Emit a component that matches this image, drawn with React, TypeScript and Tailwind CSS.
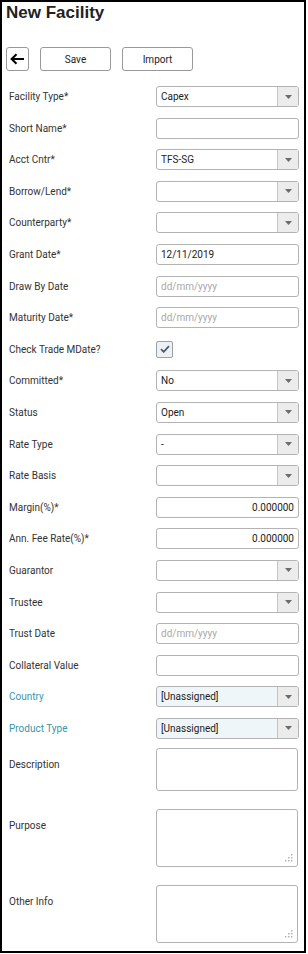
import React from 'react';

type Field =
  | { label: string; kind: 'select'; value?: string; tinted?: boolean }
  | { label: string; kind: 'text'; value?: string; placeholder?: string; right?: boolean }
  | { label: string; kind: 'check' };

const fields: Field[] = [
  { label: 'Facility Type*', kind: 'select', value: 'Capex' },
  { label: 'Short Name*', kind: 'text' },
  { label: 'Acct Cntr*', kind: 'select', value: 'TFS-SG' },
  { label: 'Borrow/Lend*', kind: 'select' },
  { label: 'Counterparty*', kind: 'select' },
  { label: 'Grant Date*', kind: 'text', value: '12/11/2019' },
  { label: 'Draw By Date', kind: 'text', placeholder: 'dd/mm/yyyy' },
  { label: 'Maturity Date*', kind: 'text', placeholder: 'dd/mm/yyyy' },
  { label: 'Check Trade MDate?', kind: 'check' },
  { label: 'Committed*', kind: 'select', value: 'No' },
  { label: 'Status', kind: 'select', value: 'Open' },
  { label: 'Rate Type', kind: 'select', value: '-' },
  { label: 'Rate Basis', kind: 'select' },
  { label: 'Margin(%)*', kind: 'text', value: '0.000000', right: true },
  { label: 'Ann. Fee Rate(%)*', kind: 'text', value: '0.000000', right: true },
  { label: 'Guarantor', kind: 'select' },
  { label: 'Trustee', kind: 'select' },
  { label: 'Trust Date', kind: 'text', placeholder: 'dd/mm/yyyy' },
  { label: 'Collateral Value', kind: 'text' },
  { label: 'Country', kind: 'select', value: '[Unassigned]', tinted: true },
  { label: 'Product Type', kind: 'select', value: '[Unassigned]', tinted: true },
];

const Caret = () => (
  <svg width="7" height="4" viewBox="0 0 7 4">
    <path d="M0 0h7L3.5 4z" fill="#6b6b6b" />
  </svg>
);

const ResizeGrip = () => (
  <svg width="8" height="8" viewBox="0 0 8 8" className="absolute bottom-[4px] right-[4px]">
    <g fill="#b5b5b5">
      <rect x="6" y="0" width="1.5" height="1.5" />
      <rect x="3" y="3" width="1.5" height="1.5" />
      <rect x="6" y="3" width="1.5" height="1.5" />
      <rect x="0" y="6" width="1.5" height="1.5" />
      <rect x="3" y="6" width="1.5" height="1.5" />
      <rect x="6" y="6" width="1.5" height="1.5" />
    </g>
  </svg>
);

const Control = ({ f }: { f: Field }) => {
  if (f.kind === 'check') {
    return (
      <div className="w-[17px] h-[17px] border border-[#9aa0a6] rounded-[2px] bg-[#eef1f4] flex items-center justify-center">
        <svg width="10" height="8" viewBox="0 0 10 8">
          <path d="M1 4.2l2.7 2.6L9 1.2" stroke="#4a5a6a" strokeWidth="1.8" fill="none" />
        </svg>
      </div>
    );
  }
  if (f.kind === 'select') {
    return (
      <div
        className={`w-[143px] h-[21px] border border-[#b3b3b3] rounded-[3px] flex overflow-hidden ${
          f.tinted ? 'bg-[#eef6f9]' : 'bg-white'
        }`}
      >
        <div className="flex-1 flex items-center pl-[4px] text-[#222]">{f.value}</div>
        <div className="w-[21px] border-l border-[#c4c4c4] bg-[#ececec] flex items-center justify-center">
          <Caret />
        </div>
      </div>
    );
  }
  return (
    <div
      className={`w-[143px] h-[21px] border border-[#b3b3b3] rounded-[3px] bg-white flex items-center px-[4px] ${
        f.right ? 'justify-end' : ''
      }`}
    >
      {f.value ? (
        <span className="text-[#222]">{f.value}</span>
      ) : (
        <span className="text-[#a8a8a8]">{f.placeholder}</span>
      )}
    </div>
  );
};

const TextArea = ({ h }: { h: string }) => (
  <div className={`relative w-[142px] ${h} border border-[#b3b3b3] rounded-[3px] bg-white`}>
    <ResizeGrip />
  </div>
);

export default function App() {
  return (
    <div
      className="w-[306px] h-[953px] border-2 border-black bg-white text-[10px] text-[#333] overflow-hidden"
      style={{ fontFamily: 'Roboto, "Liberation Sans", sans-serif' }}
    >
      <h1
        className="pl-[4px] pt-[1px] text-[17px] font-bold text-[#222] leading-[20px]"
        style={{ fontFamily: '"Liberation Sans", Arial, sans-serif' }}
      >
        New Facility
      </h1>

      <div className="flex items-center gap-[11px] pl-[4px] mt-[24px]">
        <button className="w-[23px] h-[24px] border border-[#999] rounded-[3px] flex items-center justify-center bg-white">
          <svg width="15" height="12" viewBox="0 0 15 12">
            <path d="M14 6H2M6.5 1.2L1.6 6l4.9 4.8" stroke="#000" strokeWidth="2" fill="none" />
          </svg>
        </button>
        <button className="w-[71px] h-[24px] border border-[#999] rounded-[3px] bg-white text-[#222]">Save</button>
        <button className="w-[71px] h-[24px] border border-[#999] rounded-[3px] bg-white text-[#222]">Import</button>
      </div>

      <div className="flex flex-col gap-[10.6px] mt-[15px] pl-[7px]">
        {fields.map((f) => (
          <div key={f.label} className="flex items-center h-[21px]">
            <div className={`w-[147px] ${f.kind === 'select' && f.tinted ? 'text-[#3a96a8]' : ''}`}>{f.label}</div>
            <Control f={f} />
          </div>
        ))}
      </div>

      <div className="flex flex-col gap-[18px] mt-[9px] pl-[7px]">
        <div className="flex items-start">
          <div className="w-[147px] pt-[9px]">Description</div>
          <div className="relative w-[142px] h-[43px] border border-[#b3b3b3] rounded-[3px] bg-white" />
        </div>
        <div className="flex items-start">
          <div className="w-[147px] pt-[9px]">Purpose</div>
          <TextArea h="h-[58px]" />
        </div>
        <div className="flex items-start">
          <div className="w-[147px] pt-[9px]">Other Info</div>
          <TextArea h="h-[58px]" />
        </div>
      </div>
    </div>
  );
}
